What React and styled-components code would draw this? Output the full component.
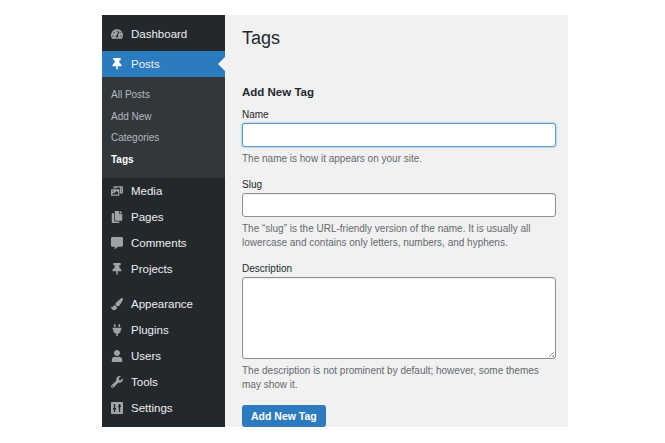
import React from "react"
import styled, { createGlobalStyle } from "styled-components"
import { FaTachometerAlt, FaThumbtack, FaPhotoVideo, FaCopy, FaCommentAlt, FaPaintBrush, FaPlug, FaUser, FaWrench } from "react-icons/fa"
import { MdSettingsInputComponent } from "react-icons/md"

const Global = createGlobalStyle`
  body { margin: 0; background: #fff; font-family: "Liberation Sans", Arial, sans-serif; }
`

const Frame = styled.div`
  display: flex;
  width: 466px;
  height: 412px;
  margin: 15px 0 0 102px;
  overflow: hidden;
`

const Sidebar = styled.nav`
  width: 123px;
  background: #23282d;
  display: flex;
  flex-direction: column;
`

const Item = styled.div`
  display: flex;
  align-items: center;
  height: 26px;
  padding-left: 9px;
  gap: 8px;
  color: #eee;
  font-size: 11.5px;
  position: relative;
  margin-top: ${({ gapTop }) => gapTop || 0}px;
  background: ${({ active }) => (active ? "#2c7bbf" : "transparent")};
  svg { color: ${({ active }) => (active ? "#fff" : "#9ea3a8")}; width: 12px; height: 12px; }
  ${({ active }) => active && `
    &:after {
      content: "";
      position: absolute;
      right: 0; top: 50%;
      margin-top: -7px;
      border: 7px solid transparent;
      border-right-color: #f1f1f1;
    }
  `}
`

const Sub = styled.div`
  background: #32373c;
  padding: 7px 0 8px;
`

const SubItem = styled.div`
  height: 21.5px;
  line-height: 21.5px;
  padding-left: 9px;
  font-size: 10px;
  color: ${({ current }) => (current ? "#fff" : "#b4b9be")};
  font-weight: ${({ current }) => (current ? 700 : 400)};
`

const Main = styled.main`
  flex: 1;
  background: #f1f1f1;
  padding: 13px 12px 0 17px;
  color: #23282d;
`

const Title = styled.h1`
  margin: 0 0 37px;
  font-size: 18px;
  font-weight: 400;
`

const Heading = styled.h2`
  margin: 0 0 11px;
  font-size: 11.5px;
  font-weight: 700;
`

const Label = styled.div`
  font-size: 10px;
  margin-bottom: 3px;
`

const Input = styled.div`
  height: ${({ h }) => h || 22}px;
  background: #fff;
  border: 1px solid ${({ focus }) => (focus ? "#5b9dd9" : "#8c8f94")};
  border-radius: 3px;
  box-shadow: ${({ focus }) => (focus ? "0 0 2px rgba(30,140,190,.8)" : "inset 0 1px 2px rgba(0,0,0,.07)")};
  position: relative;
`

const Grip = styled.span`
  position: absolute;
  right: 1px; bottom: 1px;
  width: 5px; height: 5px;
  background: linear-gradient(135deg, transparent 45%, #999 45%, #999 55%, transparent 55%, transparent 75%, #999 75%);
`

const Help = styled.p`
  margin: 5px 0 13px;
  font-size: 10px;
  line-height: 14px;
  color: #646970;
`

const Button = styled.div`
  display: inline-block;
  background: #2c7bbf;
  color: #fff;
  font-size: 10.5px;
  font-weight: 700;
  padding: 0 9px;
  height: 22px;
  line-height: 22px;
  border-radius: 3px;
`

const Gear = () => (
  <svg viewBox="0 0 12 12"><rect width="12" height="12" rx="1" fill="currentColor" /><path d="M3.5 2v8M8.5 2v8" stroke="#23282d" strokeWidth="1.3" /><rect x="2" y="6" width="3" height="1.6" fill="#23282d" /><rect x="7" y="3.5" width="3" height="1.6" fill="#23282d" /></svg>
)

export default function App() {
  return (
    <>
      <Global />
      <Frame>
        <Sidebar>
          <Item style={{ marginTop: 6 }}><FaTachometerAlt />Dashboard</Item>
          <Item gapTop={4} active><FaThumbtack />Posts</Item>
          <Sub>
            <SubItem>All Posts</SubItem>
            <SubItem>Add New</SubItem>
            <SubItem>Categories</SubItem>
            <SubItem current>Tags</SubItem>
          </Sub>
          <Item gapTop={0}><FaPhotoVideo />Media</Item>
          <Item><FaCopy />Pages</Item>
          <Item><FaCommentAlt />Comments</Item>
          <Item><FaThumbtack />Projects</Item>
          <Item gapTop={9}><FaPaintBrush />Appearance</Item>
          <Item><FaPlug />Plugins</Item>
          <Item><FaUser />Users</Item>
          <Item><FaWrench />Tools</Item>
          <Item><Gear />Settings</Item>
        </Sidebar>
        <Main>
          <Title>Tags</Title>
          <Heading>Add New Tag</Heading>
          <Label>Name</Label>
          <Input focus />
          <Help>The name is how it appears on your site.</Help>
          <Label>Slug</Label>
          <Input />
          <Help>The “slug” is the URL-friendly version of the name. It is usually all lowercase and contains only letters, numbers, and hyphens.</Help>
          <Label>Description</Label>
          <Input h={80}><Grip /></Input>
          <Help>The description is not prominent by default; however, some themes may show it.</Help>
          <Button>Add New Tag</Button>
        </Main>
      </Frame>
    </>
  )
}
